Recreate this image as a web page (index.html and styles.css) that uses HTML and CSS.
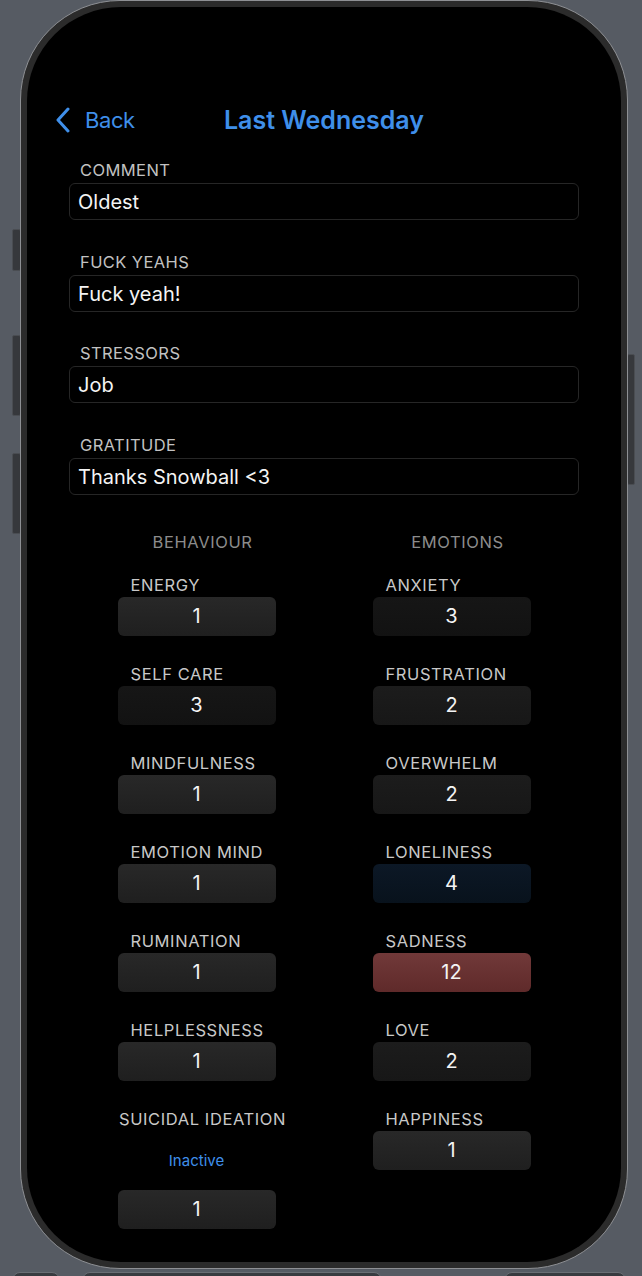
FILE: index.html
```html
<!DOCTYPE html>
<html>
<head>
<meta charset="utf-8">
<link rel="stylesheet" href="styles.css">
</head>
<body>
<div class="stage">
  <div class="btn btn-l1"></div>
  <div class="btn btn-l2"></div>
  <div class="btn btn-l3"></div>
  <div class="btn btn-r1"></div>
  <div class="phone">
    <div class="screen">
      <div class="nav">
        <div class="back">
          <svg class="chev" width="16" height="26" viewBox="0 0 16 26"><path d="M13 2 L3 13 L13 24" fill="none" stroke="#3f8fea" stroke-width="3" stroke-linecap="round" stroke-linejoin="round"/></svg>
          <span class="back-text">Back</span>
        </div>
        <div class="title">Last Wednesday</div>
        <div></div>
      </div>

      <div class="form">
        <div class="section">
          <div class="label">COMMENT</div>
          <div class="field">Oldest</div>
        </div>
        <div class="section">
          <div class="label">FUCK YEAHS</div>
          <div class="field">Fuck yeah!</div>
        </div>
        <div class="section">
          <div class="label">STRESSORS</div>
          <div class="field">Job</div>
        </div>
        <div class="section">
          <div class="label">GRATITUDE</div>
          <div class="field">Thanks Snowball &lt;3</div>
        </div>
      </div>

      <div class="columns">
        <div class="col">
          <div class="col-head">BEHAVIOUR</div>
          <div class="item"><div class="ilabel">ENERGY</div><div class="box v1">1</div></div>
          <div class="item"><div class="ilabel">SELF CARE</div><div class="box v3">3</div></div>
          <div class="item"><div class="ilabel">MINDFULNESS</div><div class="box v1">1</div></div>
          <div class="item"><div class="ilabel">EMOTION MIND</div><div class="box v1">1</div></div>
          <div class="item"><div class="ilabel">RUMINATION</div><div class="box v1">1</div></div>
          <div class="item"><div class="ilabel">HELPLESSNESS</div><div class="box v1">1</div></div>
          <div class="item last">
            <div class="ilabel center">SUICIDAL IDEATION</div>
            <div class="inactive">Inactive</div>
            <div class="box v1">1</div>
          </div>
        </div>
        <div class="col">
          <div class="col-head">EMOTIONS</div>
          <div class="item"><div class="ilabel">ANXIETY</div><div class="box v3">3</div></div>
          <div class="item"><div class="ilabel">FRUSTRATION</div><div class="box v2">2</div></div>
          <div class="item"><div class="ilabel">OVERWHELM</div><div class="box v2">2</div></div>
          <div class="item"><div class="ilabel">LONELINESS</div><div class="box v4">4</div></div>
          <div class="item"><div class="ilabel">SADNESS</div><div class="box v12">12</div></div>
          <div class="item"><div class="ilabel">LOVE</div><div class="box v2">2</div></div>
          <div class="item"><div class="ilabel">HAPPINESS</div><div class="box v1">1</div></div>
        </div>
      </div>
    </div>
  </div>
  <div class="below">
    <div class="pill p1"></div>
    <div class="pill p2"></div>
    <div class="pill p3"></div>
  </div>
</div>
</body>
</html>
```
FILE: styles.css
```css
html, body {
  margin: 0;
  padding: 0;
}
body {
  background: #565b63;
  width: 642px;
  height: 1276px;
  overflow: hidden;
  font-family: Inter, "Liberation Sans", sans-serif;
}
.stage {
  position: relative;
  padding-left: 20px;
}
.btn {
  position: absolute;
  background: #36383c;
  border: 1px solid #4a4d52;
  border-radius: 2px;
  box-sizing: border-box;
}
.btn-l1 { left: 12px; top: 229px; width: 9px; height: 42px; }
.btn-l2 { left: 12px; top: 335px; width: 9px; height: 81px; }
.btn-l3 { left: 12px; top: 453px; width: 9px; height: 81px; }
.btn-r1 { left: 627px; top: 354px; width: 8px; height: 131px; }

.phone {
  position: relative;
  width: 608px;
  height: 1269px;
  box-sizing: border-box;
  border: 1px solid #8e9094;
  border-radius: 100px;
  background: #2b2b2b;
  padding: 6px;
}
.screen {
  width: 100%;
  height: 100%;
  background: #000;
  border-radius: 94px;
  overflow: hidden;
  padding-top: 91px;
  box-sizing: border-box;
}
.nav {
  display: grid;
  grid-template-columns: 1fr auto 1fr;
  align-items: center;
  height: 44px;
}
.back {
  display: flex;
  align-items: center;
  padding-left: 28px;
  color: #3f8fea;
}
.chev { display: block; }
.back-text {
  font-size: 22px;
  margin-left: 14px;
  letter-spacing: -0.4px;
}
.title {
  font-size: 25px;
  font-weight: 600;
  color: #3f8fea;
  letter-spacing: 0;
}

.form {
  padding: 18px 42px 0;
  display: flex;
  flex-direction: column;
  gap: 31.5px;
}
.section {
  display: flex;
  flex-direction: column;
  gap: 3px;
}
.label {
  font-size: 16.5px;
  line-height: 20px;
  height: 20px;
  color: #c2c2c2;
  padding-left: 11px;
  letter-spacing: 0.4px;
}
.field {
  height: 37px;
  box-sizing: border-box;
  border: 1px solid #262626;
  border-radius: 6px;
  padding-left: 8px;
  font-size: 20px;
  line-height: 36px;
  color: #f4f4f4;
}

.columns {
  display: flex;
  justify-content: center;
  gap: 55px;
  margin-top: 37px;
}
.col {
  width: 200px;
  display: flex;
  flex-direction: column;
}
.col-head {
  font-size: 16.5px;
  line-height: 20px;
  color: #8c8c8c;
  text-align: center;
  padding-left: 12px;
  margin-bottom: 23px;
  letter-spacing: 0.6px;
}
.item {
  display: flex;
  flex-direction: column;
  align-items: center;
  margin-bottom: 28px;
}
.ilabel {
  width: 158px;
  box-sizing: border-box;
  padding-left: 13px;
  font-size: 16.5px;
  line-height: 20px;
  color: #c8c8c8;
  white-space: nowrap;
  margin-bottom: 2px;
  letter-spacing: 0.6px;
}
.ilabel.center {
  width: auto;
  padding-left: 12px;
  text-align: center;
}
.inactive {
  font-size: 15px;
  line-height: 20px;
  color: #3f8fea;
  margin-top: 20px;
  margin-bottom: 19px;
}
.box {
  width: 158px;
  height: 39px;
  border-radius: 6px;
  text-align: center;
  line-height: 39px;
  font-size: 20px;
  color: #f4f4f4;
}
.v1 { background: linear-gradient(#282828, #1f1f1f); }
.v2 { background: linear-gradient(#1c1c1c, #171717); }
.v3 { background: linear-gradient(#161616, #121212); }
.v4 { background: linear-gradient(#0c1826, #08121c); }
.v12 { background: linear-gradient(#713939, #5f2a2a); }

.below {
  display: flex;
  margin-top: 3px;
  margin-left: -8px;
  gap: 22px;
}
.pill {
  height: 14px;
  background: #383b40;
  border: 1px solid #6a6e74;
  border-radius: 8px;
}
.p1 { width: 46px; }
.p2 { width: 298px; }
.p3 { width: 120px; margin-left: 100px; }
```
